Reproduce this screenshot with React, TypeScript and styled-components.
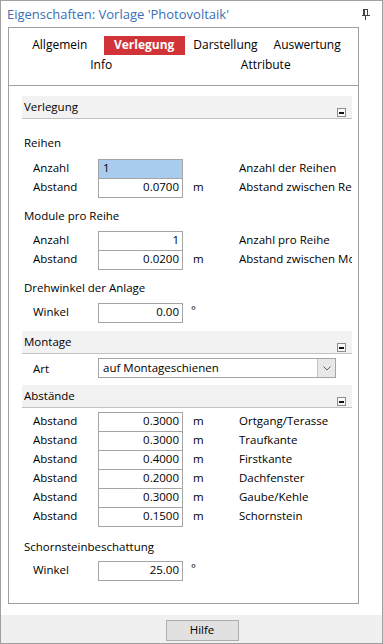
import React from "react";
import styled, { createGlobalStyle } from "styled-components";

const Global = createGlobalStyle`
  html, body { margin: 0; padding: 0; background: #ffffff; }
  * { box-sizing: border-box; }
`;

const FONT = `"Open Sans", "Noto Sans", "Liberation Sans", sans-serif`;

const Window = styled.div`
  width: 383px;
  height: 644px;
  border: 1px solid #a0a0a0;
  display: flex;
  flex-direction: column;
  font-family: ${FONT};
  font-size: 11.5px;
  color: #000;
  background: #fff;
  overflow: hidden;
`;

const TitleBar = styled.div`
  height: 26px;
  display: flex;
  align-items: center;
  justify-content: space-between;
  padding: 0 12px 0 6px;
`;

const Title = styled.div`
  color: #3a70b4;
  font-size: 13px;
  line-height: 20px;
  white-space: nowrap;
`;

const Pin = () => (
  <svg width="8" height="11" viewBox="0 0 8 11">
    <rect x="1.5" y="0.5" width="4" height="6" fill="none" stroke="#444" />
    <rect x="1" y="0" width="2" height="7" fill="#444" />
    <rect x="0" y="6" width="8" height="1" fill="#444" />
    <rect x="3" y="7" width="1" height="4" fill="#444" />
  </svg>
);

const Body = styled.div`
  display: flex;
  padding-left: 7px;
`;

const Panel = styled.div`
  width: 351px;
  height: 577px;
  border: 1px solid #a0a0a0;
  display: flex;
  flex-direction: column;
`;

const TabHeader = styled.div`
  height: 58px;
  border-bottom: 1px solid #a0a0a0;
  padding: 7px 10px 0 10px;
  display: flex;
  flex-direction: column;
`;

const TabRow = styled.div<{ $cols: number }>`
  display: grid;
  grid-template-columns: repeat(${(p) => p.$cols}, 1fr);
  height: 20px;
  align-items: center;
`;

const Tab = styled.div<{ $active?: boolean }>`
  justify-self: center;
  width: 81px;
  margin-left: ${(p) => (p.$active ? "3px" : "0")};
  height: 19px;
  line-height: 17px;
  text-align: center;
  font-size: 12px;
  white-space: nowrap;
  font-weight: ${(p) => (p.$active ? 700 : 400)};
  color: ${(p) => (p.$active ? "#fff" : "#000")};
  background: ${(p) => (p.$active ? "#d13438" : "transparent")};
`;

const Content = styled.div`
  flex: 1;
  padding: 10px 6px 0 13px;
  display: flex;
  flex-direction: column;
  overflow: hidden;
`;

const SectionHeader = styled.div<{ $mt?: number }>`
  height: 23px;
  margin-top: ${(p) => p.$mt ?? 0}px;
  background: #f2f2f2;
  border-bottom: 1px solid #c2c2c2;
  display: flex;
  justify-content: space-between;
  padding: 2px 6px 0 2px;
  line-height: 18px;
  flex-shrink: 0;
`;

const Collapse = styled.div`
  width: 9px;
  height: 9px;
  margin-top: 10px;
  border: 1px solid #8c8c8c;
  background: #fafafa;
  display: flex;
  align-items: center;
  justify-content: center;
  &::after {
    content: "";
    width: 5px;
    height: 2px;
    background: #111;
  }
`;

const GroupLabel = styled.div<{ $mt: number; $mb: number }>`
  height: 20px;
  line-height: 20px;
  padding-left: 2px;
  margin-top: ${(p) => p.$mt}px;
  margin-bottom: ${(p) => p.$mb}px;
  white-space: nowrap;
  flex-shrink: 0;
`;

const Rows = styled.div<{ $mt?: number }>`
  display: flex;
  flex-direction: column;
  margin-top: ${(p) => p.$mt ?? 0}px;
  flex-shrink: 0;
`;

const Row = styled.div`
  display: grid;
  grid-template-columns: 76px 85px 56px minmax(0, 1fr);
  height: 20px;
  line-height: 18px;
  align-items: start;
  white-space: nowrap;
  & + & {
    margin-top: -1px;
  }
`;

const RowLabel = styled.div`
  padding-left: 11px;
`;

const Field = styled.div<{ $selected?: boolean }>`
  height: 20px;
  border: 1px solid #a5a5a5;
  background: ${(p) => (p.$selected ? "#a8cbee" : "#fff")};
  text-align: ${(p) => (p.$selected ? "left" : "right")};
  padding: 0 3px 0 4px;
  line-height: 16px;
  width: 85px;
`;

const Unit = styled.div<{ $deg?: boolean }>`
  padding-left: ${(p) => (p.$deg ? "8px" : "10px")};
  line-height: ${(p) => (p.$deg ? "13px" : "18px")};
`;

const Desc = styled.div`
  min-width: 0;
  overflow: hidden;
  white-space: nowrap;
`;

const SelectRow = styled.div`
  display: grid;
  grid-template-columns: 76px 238px;
  height: 20px;
  align-items: center;
  margin-top: 4px;
  flex-shrink: 0;
`;

const Select = styled.div`
  height: 20px;
  border: 1px solid #a5a5a5;
  display: flex;
  align-items: stretch;
  background: #fff;
`;

const SelectText = styled.div`
  flex: 1;
  padding-left: 4px;
  line-height: 17px;
`;

const SelectButton = styled.div`
  width: 18px;
  background: #e8e8e8;
  border-left: 1px solid #c4c4c4;
  display: flex;
  align-items: center;
  justify-content: center;
`;

const Gap = styled.div`
  height: 11px;
  flex-shrink: 0;
`;

const Footer = styled.div`
  flex: 1;
  background: #f0f0f0;
  display: flex;
  justify-content: center;
  align-items: flex-start;
  padding: 5px 0 0 21px;
`;

const Button = styled.div`
  width: 73px;
  height: 21px;
  border: 1px solid #adadad;
  background: #e1e1e1;
  text-align: center;
  line-height: 18px;
  font-size: 11.5px;
`;

type R = { label: string; value: string; unit?: string; desc?: string; selected?: boolean };

const FieldRows = ({ rows, mt }: { rows: R[]; mt?: number }) => (
  <Rows $mt={mt}>
    {rows.map((r, i) => (
      <Row key={i}>
        <RowLabel>{r.label}</RowLabel>
        <Field $selected={r.selected}>{r.value}</Field>
        <Unit $deg={r.unit === "°"}>{r.unit ?? ""}</Unit>
        <Desc>{r.desc ?? ""}</Desc>
      </Row>
    ))}
  </Rows>
);

export default function App() {
  return (
    <>
      <Global />
      <Window>
        <TitleBar>
          <Title>Eigenschaften: Vorlage 'Photovoltaik'</Title>
          <Pin />
        </TitleBar>
        <Body>
          <Panel>
            <TabHeader>
              <TabRow $cols={4}>
                <Tab>Allgemein</Tab>
                <Tab $active>Verlegung</Tab>
                <Tab>Darstellung</Tab>
                <Tab>Auswertung</Tab>
              </TabRow>
              <TabRow $cols={2}>
                <Tab>Info</Tab>
                <Tab>Attribute</Tab>
              </TabRow>
            </TabHeader>
            <Content>
              <SectionHeader>
                <span>Verlegung</span>
                <Collapse />
              </SectionHeader>
              <GroupLabel $mt={14} $mb={6}>Reihen</GroupLabel>
              <FieldRows
                rows={[
                  { label: "Anzahl", value: "1", desc: "Anzahl der Reihen", selected: true },
                  { label: "Abstand", value: "0.0700", unit: "m", desc: "Abstand zwischen Reihen" },
                ]}
              />
              <GroupLabel $mt={8} $mb={5}>Module pro Reihe</GroupLabel>
              <FieldRows
                rows={[
                  { label: "Anzahl", value: "1", desc: "Anzahl pro Reihe" },
                  { label: "Abstand", value: "0.0200", unit: "m", desc: "Abstand zwischen Modulen" },
                ]}
              />
              <GroupLabel $mt={8} $mb={5}>Drehwinkel der Anlage</GroupLabel>
              <FieldRows rows={[{ label: "Winkel", value: "0.00", unit: "°" }]} />
              <SectionHeader $mt={8}>
                <span>Montage</span>
                <Collapse />
              </SectionHeader>
              <SelectRow>
                <RowLabel>Art</RowLabel>
                <Select>
                  <SelectText>auf Montageschienen</SelectText>
                  <SelectButton>
                    <svg width="8" height="5" viewBox="0 0 8 5">
                      <path d="M0.5 0.5 L4 4 L7.5 0.5" fill="none" stroke="#606060" strokeWidth="1" />
                    </svg>
                  </SelectButton>
                </Select>
              </SelectRow>
              <SectionHeader $mt={7}>
                <span>Abstände</span>
                <Collapse />
              </SectionHeader>
              <FieldRows
                mt={4}
                rows={[
                  { label: "Abstand", value: "0.3000", unit: "m", desc: "Ortgang/Terasse" },
                  { label: "Abstand", value: "0.3000", unit: "m", desc: "Traufkante" },
                  { label: "Abstand", value: "0.4000", unit: "m", desc: "Firstkante" },
                  { label: "Abstand", value: "0.2000", unit: "m", desc: "Dachfenster" },
                  { label: "Abstand", value: "0.3000", unit: "m", desc: "Gaube/Kehle" },
                  { label: "Abstand", value: "0.1500", unit: "m", desc: "Schornstein" },
                ]}
              />
              <GroupLabel $mt={10} $mb={4}>Schornsteinbeschattung</GroupLabel>
              <FieldRows rows={[{ label: "Winkel", value: "25.00", unit: "°" }]} />
            </Content>
          </Panel>
        </Body>
        <Gap />
        <Footer>
          <Button>Hilfe</Button>
        </Footer>
      </Window>
    </>
  );
}
